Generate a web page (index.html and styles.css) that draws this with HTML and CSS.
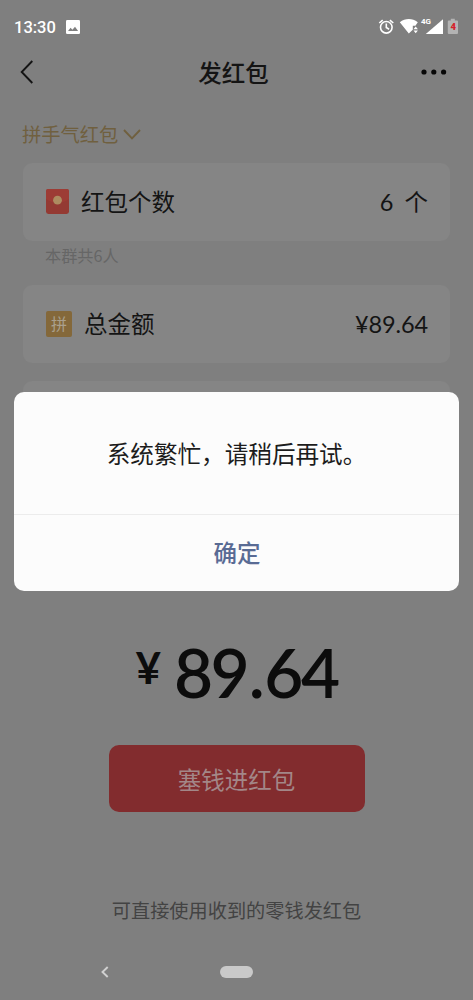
FILE: index.html
```html
<!DOCTYPE html>
<html lang="zh-CN">
<head>
<meta charset="utf-8">
<title>发红包</title>
<link rel="stylesheet" href="styles.css">
</head>
<body>
<div class="screen">
  <header class="status">
    <span class="time">13:30</span>
    <svg class="photo" width="14" height="14" viewBox="0 0 14 14"><rect width="14" height="14" rx="1.3" fill="#fff"/><path d="M2 11l2.600-3.300 1.800 2.100L9 6.800l3.100 4.200z" fill="#7f7f7f"/></svg>
    <svg class="signals" width="82" height="22" viewBox="378 14 82 22">
      <g fill="none" stroke="#fff" stroke-width="1.600"><circle cx="386.300" cy="27.300" r="5.800"/><path d="M386.300 23.500v4l2.800 1.700M379.300 23l3.400-2.900M389.900 20.100l3.400 2.900"/></g>
      <path d="M399.800 22.300c5.500-4.300 12.500-4.300 18 0l-2.400 3.400h-2.600v4l-4 3.800z" fill="#fff"/>
      <path d="M413.500 29.300l2.200-2.700 2.200 2.700zM413.500 30.600l2.200 2.700 2.200-2.700z" fill="#fff"/>
      <text x="421" y="24.200" class="network">4G</text>
      <path d="M443 19.300V34h-17.200z" fill="#fff"/>
      <path d="M448.800 20.500h2v-1.700h4v1.700h2.200q1 0 1 1v11.400q0 1-1 1h-8.200q-1 0-1-1V21.500q0-1 1-1z" fill="#b3b3b3"/>
      <text x="450.400" y="30.300" class="charge">4</text>
    </svg>
  </header>
  <nav class="titlebar">
    <svg width="14" height="24" viewBox="0 0 14 24"><path d="M12.300 1L1.700 12l10.600 11" fill="none" stroke="#141414" stroke-width="1.900"/></svg>
    <h1>发红包</h1>
    <svg width="26" height="6" viewBox="0 0 26 6" fill="#080808"><circle cx="3" cy="3" r="2.600"/><circle cx="12.800" cy="3" r="2.600"/><circle cx="22.600" cy="3" r="2.600"/></svg>
  </nav>
  <main class="content">
    <div class="kind"><span>拼手气红包</span><svg width="18" height="11" viewBox="0 0 18 11"><path d="M1 1l8 8.300L17 1" fill="none" stroke="#70603f" stroke-width="1.900"/></svg></div>
    <section class="card">
      <svg class="packet" width="23" height="25" viewBox="0 0 23 25"><rect width="23" height="25" rx="2.400" fill="#943a33"/><path d="M0 10q11.500 8 23 0V2.400Q23 0 20.600 0H2.400Q0 0 0 2.400z" fill="#9d3c35"/><circle cx="11.500" cy="11.200" r="4.400" fill="#ad8c60"/></svg>
      <span class="label">红包个数</span><span class="value"><span class="number">6</span><span class="unit">个</span></span>
    </section>
    <p class="members">本群共6人</p>
    <section class="card">
      <span class="pin">拼</span>
      <span class="label">总金额</span><span class="value number money">¥89.64</span>
    </section>
    <section class="card message"></section>
    <div class="total"><span class="yen">¥</span><span class="sum">89<span class="point">.</span>64</span></div>
    <button class="pay">塞钱进红包</button>
    <p class="note">可直接使用收到的零钱发红包</p>
  </main>
  <footer class="system">
    <svg width="8" height="12" viewBox="0 0 8 12"><path d="M6.700 1L1.500 6l5.200 5" fill="none" stroke="#d0d0d0" stroke-width="1.900"/></svg>
    <span class="home"></span>
  </footer>
  <div class="dialog" role="dialog">
    <p class="notice">系统繁忙，请稍后再试。</p>
    <button class="confirm">确定</button>
  </div>
</div>
</body>
</html>
```
FILE: styles.css
```css
* { box-sizing: border-box; }
body { margin: 0; background: #7f7f7f; color: #141414; font-family: "Noto Sans CJK SC", sans-serif; }
h1, p { margin: 0; }
svg { display: block; flex: none; }
button { border: 0; padding: 0; font-family: inherit; }
.screen { position: relative; display: flex; flex-direction: column; width: 473px; height: 1000px; overflow: hidden; }
.status { display: flex; align-items: center; height: 50px; padding: 4px 13px 0 14px; }
.time { width: 52px; padding-top: 1px; color: #fff; font: 500 16.500px/20px Roboto, sans-serif; }
.signals { margin: -4px 0 0 auto; }
.network { fill: #fff; font: 700 8px Roboto, sans-serif; }
.charge { fill: #d51f2b; font: 900 9.500px Roboto, sans-serif; }
.titlebar { display: flex; align-items: center; justify-content: space-between; height: 44px; padding: 0 26px 0 20px; }
.titlebar h1 { padding-left: 12px; font-size: 23.500px; font-weight: 500; line-height: 34px; }
.content { display: flex; flex-direction: column; padding: 23px 23px 0; }
.kind { display: flex; align-items: center; gap: 5px; height: 34px; margin-left: -1px; color: #70603f; font-size: 19.300px; }
.card { display: flex; flex: none; align-items: center; height: 78px; margin-top: 12px; padding: 0 22px 0 23px; border-radius: 9px; background: #858585; }
.packet { margin-top: -1px; }
.label { margin-left: 12px; padding-bottom: 2px; font-size: 23.500px; line-height: 34px; }
.value { display: flex; align-items: center; gap: 11px; margin-left: auto; font-size: 23.500px; line-height: 34px; }
.number { font-family: Lato, sans-serif; font-size: 23.500px; }
.unit { padding-bottom: 2px; }
.money { letter-spacing: -.1px; }
.members { height: 32px; padding-left: 22px; color: #666; font-size: 16.200px; line-height: 29px; }
.pin { width: 26px; height: 26px; border-radius: 2px; background: #84683a; color: #aaa08d; font-size: 16px; line-height: 25px; text-align: center; }
.message { margin-top: 18px; }
.total { display: flex; align-items: flex-start; justify-content: center; gap: 13px; height: 88px; margin-top: 175px; color: #0c0c0c; font-family: Lato, sans-serif; font-weight: 700; }
.yen { padding-top: 8px; font-size: 44px; line-height: 50px; }
.sum { font-size: 67.500px; font-weight: 600; line-height: 76px; letter-spacing: -2.500px; }
.point { margin: 0 2px 0 1.500px; }
.pay { align-self: center; width: 256px; height: 67px; margin-top: 23px; border-radius: 10px; background: #822c2e; color: #a38788; font-size: 23.500px; }
.note { margin-top: 82px; color: #434343; font-size: 19.200px; line-height: 32px; text-align: center; }
.system { display: flex; align-items: center; height: 56px; margin-top: auto; padding-left: 101px; }
.home { width: 33px; height: 12px; margin-left: 111px; border-radius: 6px; background: #c9c9c9; }
.dialog { position: absolute; top: 392px; left: 14px; width: 445px; height: 199px; border-radius: 10px; background: #fcfcfc; }
.notice { height: 123px; border-bottom: 1px solid #ececec; color: #1c1c1c; font-size: 23.600px; line-height: 122px; text-align: center; }
.confirm { display: block; width: 100%; height: 74px; padding-left: 1px; background: transparent; color: #596b94; font-size: 23.500px; font-weight: 500; }
```
